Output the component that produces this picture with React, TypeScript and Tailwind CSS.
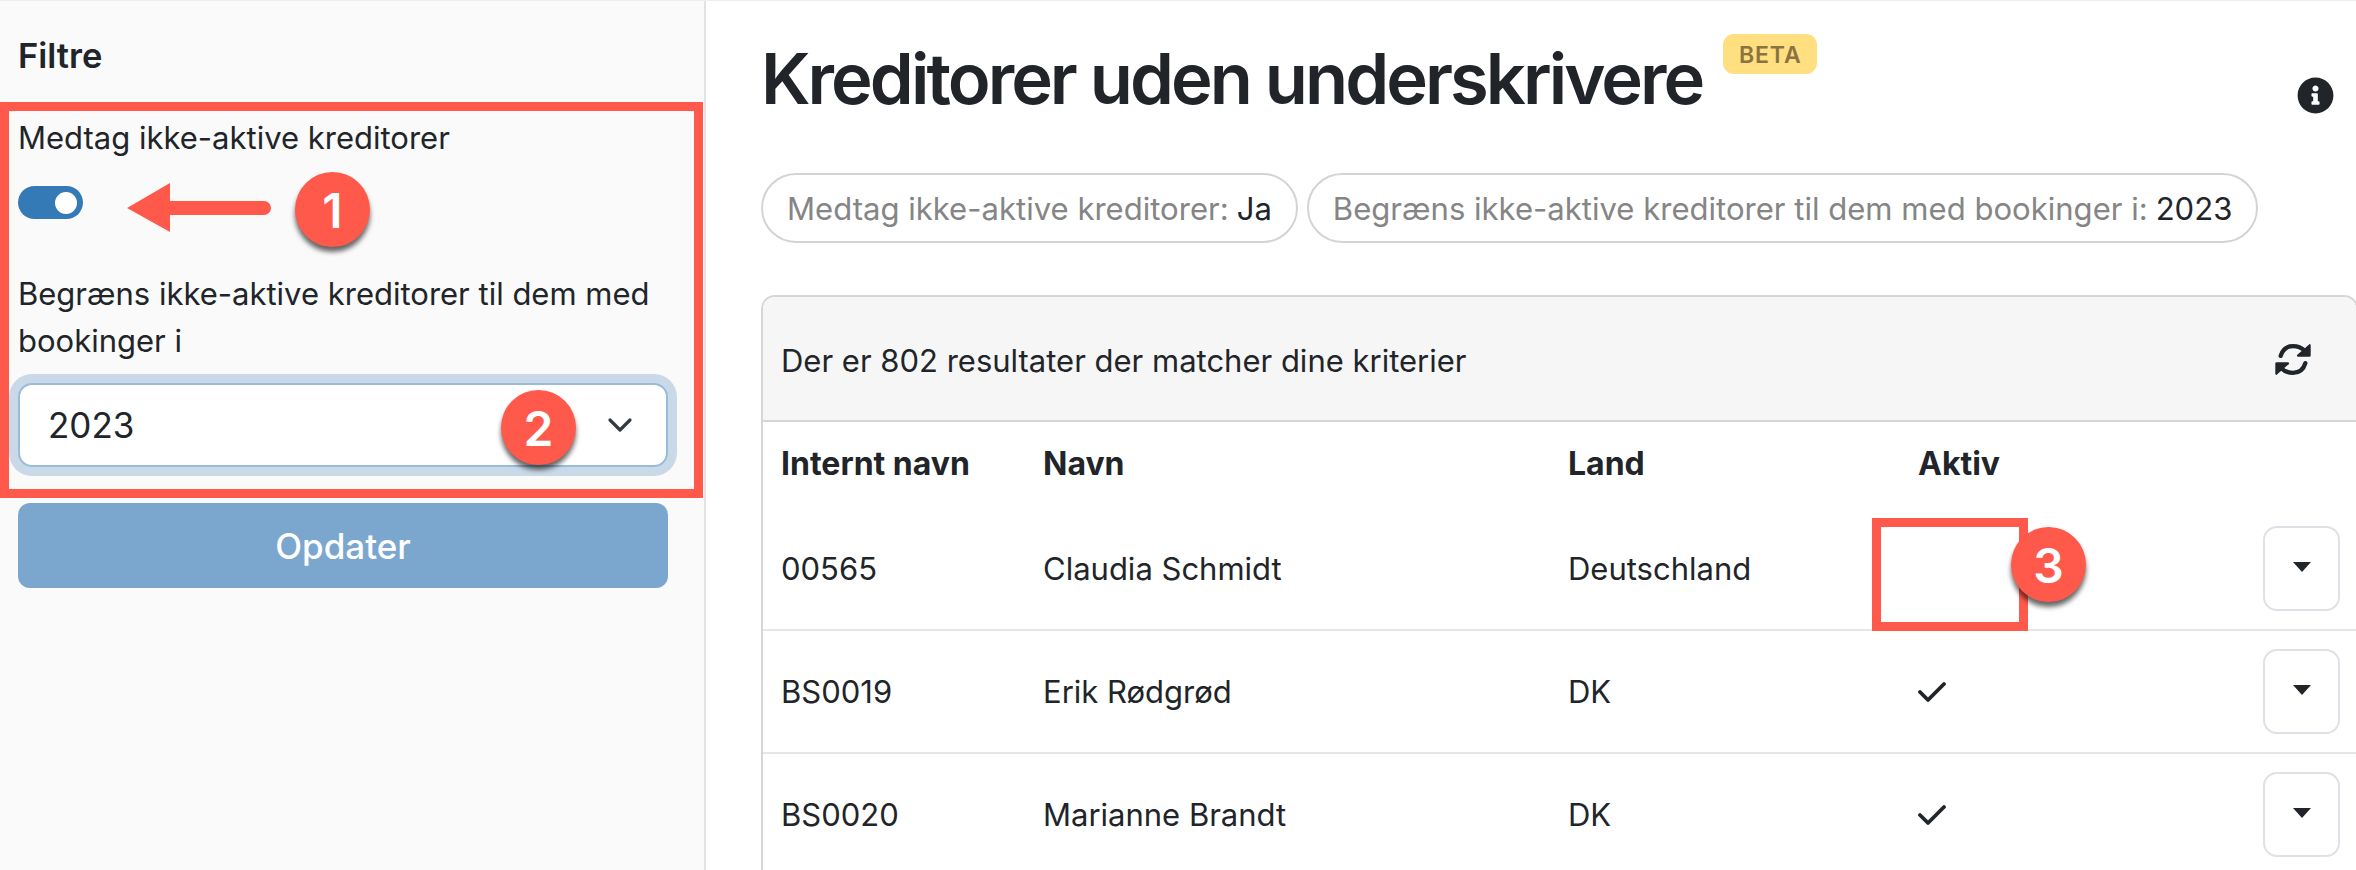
import clsx from "clsx";
import { FaInfoCircle } from "react-icons/fa";

const creditors = [
  { id: "00565", name: "Claudia Schmidt", country: "Deutschland", active: false },
  { id: "BS0019", name: "Erik Rødgrød", country: "DK", active: true },
  { id: "BS0020", name: "Marianne Brandt", country: "DK", active: true },
];

const columns = "grid grid-cols-[262px_525px_350px_345px_1fr]";

function StepBadge({ step, className }: { step: number; className: string }) {
  return (
    <span
      className={clsx(
        "absolute flex h-[75px] w-[75px] items-center justify-center rounded-full bg-[#ff594b] pt-[3px] text-[48px] font-semibold leading-none text-white shadow-[0_5px_5px_rgba(0,0,0,0.6)]",
        className,
      )}
    >
      {step}
    </span>
  );
}

function Chip({ label, value }: { label: string; value: string }) {
  return (
    <div className="flex h-[70px] items-center gap-2 whitespace-nowrap rounded-full border-2 border-[#d4d4d4] px-[24px] pt-[2px] text-[31.07px] text-[#858585]">
      {label}
      <span className="text-[#212529]">{value}</span>
    </div>
  );
}

function RefreshIcon() {
  return (
    <svg className="mb-[5px] h-[33px] w-[36px]" viewBox="0 0 108 98">
      <path d="M17 38C23 17 38 9 54 9C68 9 79 13 89 23" fill="none" stroke="#212529" strokeWidth="13" strokeLinecap="round" />
      <path d="M91 60C85 81 70 89 54 89C40 89 29 85 19 75" fill="none" stroke="#212529" strokeWidth="13" strokeLinecap="round" />
      <path d="M103 3Q107 2 107 7V37Q107 41 103 41H70Q63 40 67 35Z" fill="#212529" />
      <path d="M5 95Q1 96 1 91V61Q1 57 5 57H38Q45 58 41 63Z" fill="#212529" />
    </svg>
  );
}

function CheckIcon() {
  return (
    <svg className="h-[22px] w-[29px]" fill="none" viewBox="0 0 29 22">
      <path d="M2 11L10 19L26 3" stroke="#212529" strokeLinecap="round" strokeLinejoin="round" strokeWidth="3.8" />
    </svg>
  );
}

function FilterSidebar() {
  return (
    <aside className="relative h-full w-[706px] shrink-0 border-r-2 border-[#e2e2e2] bg-[#fafafa] pl-[18px] pr-[36px] pt-[28px]">
      <h2 className="text-[34.5px] font-semibold leading-[54px]">Filtre</h2>
      <p className="mt-[31px] leading-[47px]">Medtag ikke-aktive kreditorer</p>
      <button
        aria-label="Medtag ikke-aktive kreditorer"
        className="mt-[25px] flex h-[33px] w-[65px] items-center justify-end rounded-full bg-[#337ab7] pr-[6px]"
        type="button"
      >
        <span className="h-[22px] w-[22px] rounded-full bg-white" />
      </button>
      <p className="mt-[51px] whitespace-nowrap leading-[47px]">
        Begræns ikke-aktive kreditorer til dem med
        <br />
        bookinger i
      </p>
      <button
        className="mt-[19px] flex h-[84px] w-full items-center justify-between rounded-[14px] border-2 border-[#99bcdb] bg-white pl-[28px] pr-[33px] text-[35px] shadow-[0_0_0_9px_#c9d9e7]"
        type="button"
      >
        2023
        <svg className="h-[16px] w-[26px]" fill="none" viewBox="0 0 26 16">
          <path d="M3 3l10 10L23 3" stroke="#343a40" strokeLinecap="round" strokeLinejoin="round" strokeWidth="3.2" />
        </svg>
      </button>
      <button className="mt-[36px] h-[85px] w-full rounded-[12px] bg-[#7ba7cf] pt-[2px] text-[35px] font-medium text-white" type="button">
        Opdater
      </button>

      <div className="absolute left-0 top-[101px] h-[396px] w-[703px] border-[9px] border-[#ff594b]" />
      <svg className="absolute left-[127px] top-[182px] h-[50px] w-[145px]" fill="#ff594b" viewBox="0 0 145 50">
        <path d="M0 25L43 0V18H137A7 7 0 0 1 137 32H43V49Z" />
      </svg>
      <StepBadge className="left-[295px] top-[171px]" step={1} />
      <StepBadge className="left-[501px] top-[389px]" step={2} />
    </aside>
  );
}

export default function App() {
  return (
    <div className="relative flex h-[870px] w-[2356px] overflow-hidden border-t border-[#eeeeee] bg-white font-[Inter,sans-serif] text-[31px] text-[#212529]">
      <FilterSidebar />

      <main className="flex min-w-0 flex-1 flex-col pl-[55px]">
        <header className="flex h-[172px] shrink-0 items-start pr-[22px]">
          <h1 className="mt-[34px] whitespace-nowrap text-[70.5px] font-semibold leading-[88px] tracking-[-0.0418em]">
            Kreditorer uden underskrivere
          </h1>
          <span className="ml-[21px] mt-[33px] flex h-[40px] w-[94px] items-center justify-center rounded-[11px] bg-[#ffdf80] pt-[3px] text-[23px] font-semibold tracking-[0.04em] text-[#8b7340]">
            BETA
          </span>
          <FaInfoCircle className="ml-auto mt-[76px] h-[37px] w-[37px]" />
        </header>

        <div className="flex shrink-0 gap-[9px]">
          <Chip label="Medtag ikke-aktive kreditorer:" value="Ja" />
          <Chip label="Begræns ikke-aktive kreditorer til dem med bookinger i:" value="2023" />
        </div>

        <section className="mt-[52px] h-[600px] w-[1597px] shrink-0 rounded-t-[14px] border-2 border-[#d6d6d6]">
          <div className="flex h-[125px] items-center justify-between rounded-t-[12px] border-b-2 border-[#d6d6d6] bg-[#f6f6f6] pl-[18px] pr-[45px] pt-[6px]">
            Der er 802 resultater der matcher dine kriterier
            <RefreshIcon />
          </div>
          <div className={clsx(columns, "h-[86px] items-center pb-[2px] pl-[18px] text-[32px] font-bold")}>
            <span>Internt navn</span>
            <span>Navn</span>
            <span>Land</span>
            <span>Aktiv</span>
          </div>
          {creditors.map((creditor) => (
            <div
              key={creditor.id}
              className={clsx(columns, "h-[123px] items-center border-b-2 border-[#e4e6e7] pl-[18px]")}
            >
              <span className="pt-[2px]">{creditor.id}</span>
              <span className="pt-[2px]">{creditor.name}</span>
              <span className="pt-[2px]">{creditor.country}</span>
              <span>{creditor.active && <CheckIcon />}</span>
              <button
                aria-label="Handlinger"
                className="flex h-[85px] w-[77px] items-center justify-center rounded-[14px] border-2 border-[#dee2e6] bg-white"
                type="button"
              >
                <span className="mb-[4px] border-x-[9px] border-t-[10px] border-x-transparent border-t-[#212529]" />
              </button>
            </div>
          ))}
        </section>
      </main>

      <div className="absolute left-[1872px] top-[517px] h-[113px] w-[156px] border-[9px] border-[#ff594b]" />
      <StepBadge className="left-[2011px] top-[526px]" step={3} />
    </div>
  );
}
